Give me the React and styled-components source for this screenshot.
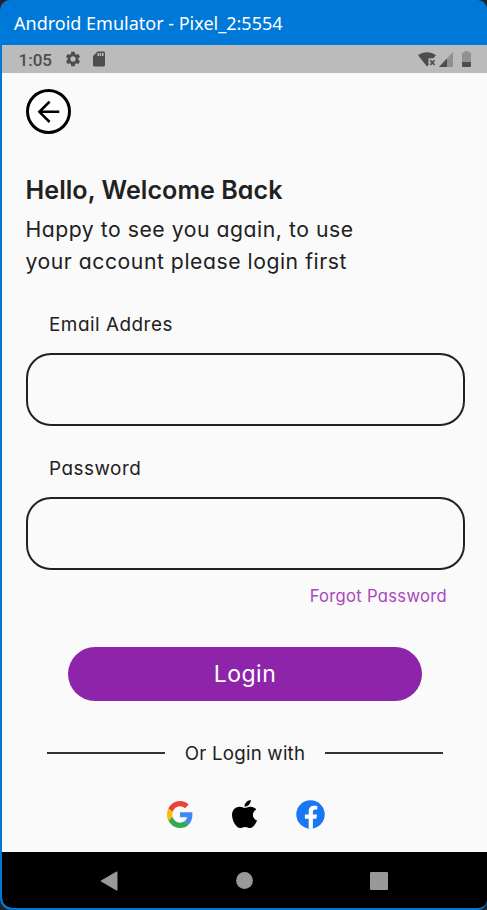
import React from "react";
import styled, { createGlobalStyle } from "styled-components";
import { MdSettings, MdSdCard } from "react-icons/md";

const GlobalStyle = createGlobalStyle`
  * { box-sizing: border-box; }
  body { margin: 0; background: #20242c; }
`;

const Window = styled.div`
  display: flex;
  flex-direction: column;
  width: 487px;
  height: 910px;
  overflow: hidden;
  background: #0078d7;
  border-left: 2px solid #0078d7;
  border-bottom: 2px solid #0078d7;
  border-radius: 10px 9px 9px 12px;
`;

const TitleBar = styled.header`
  display: flex;
  align-items: center;
  flex: none;
  height: 45px;
  padding: 0 12px;
  color: #fff;
  font: 400 18px "Noto Sans", "Open Sans", sans-serif;
  white-space: nowrap;
`;

const StatusBar = styled.div`
  display: flex;
  align-items: center;
  justify-content: space-between;
  flex: none;
  height: 28px;
  padding: 0 16px 0 16.5px;
  background: #bbb;
  color: #4d4d4d;
`;

const Clock = styled.span`
  width: 36px;
  padding-top: 1px;
  font: 500 17px/28px Roboto, sans-serif;
`;

const StatusGroup = styled.div`
  display: flex;
  align-items: center;
  gap: ${(p) => p.$gap}px;
`;

const Screen = styled.main`
  display: flex;
  flex-direction: column;
  flex: 1;
  padding: 16px 22px 0 24px;
  background: #fafafa;
  color: #212121;
  font-family: Inter, sans-serif;
  font-feature-settings: "cv11" 1;
  white-space: nowrap;
`;

const BackButton = styled.button`
  display: grid;
  place-items: center;
  flex: none;
  width: 45px;
  height: 45px;
  padding: 0;
  border: 3.5px solid #000;
  border-radius: 50%;
  background: #fff;
`;

const Heading = styled.h1`
  margin: 40px 0 7px -0.5px;
  font-size: 25.1px;
  font-weight: 600;
  line-height: 32px;
  letter-spacing: 0.04px;
`;

const Intro = styled.p`
  margin: 0 0 1px -0.5px;
  font-size: 21.2px;
  line-height: 32px;
  letter-spacing: 0.53px;
`;

const Field = styled.label`
  display: flex;
  flex-direction: column;
  gap: 15.5px;
  margin-top: ${(p) => p.$top}px;
`;

const FieldName = styled.span`
  padding-left: 23px;
  font-size: 18.9px;
  line-height: 25px;
  letter-spacing: 0.5px;
`;

const Input = styled.input`
  width: 439px;
  height: 73.5px;
  padding: 0 24px;
  border: 2px solid #212121;
  border-radius: 25px;
  background: transparent;
  font: inherit;
  font-size: 18px;
  outline: none;
`;

const ForgotLink = styled.a`
  align-self: flex-end;
  margin: 16px 18px 0 0;
  color: #ab47bc;
  font-size: 16.6px;
  line-height: 20px;
  letter-spacing: 0.3px;
`;

const LoginButton = styled.button`
  width: 354px;
  height: 54px;
  margin: 41px 0 0 42px;
  padding: 0;
  border: 0;
  border-radius: 27px;
  background: #8e24aa;
  color: #fff;
  font: inherit;
  font-size: 23px;
  font-feature-settings: inherit;
  letter-spacing: 0.5px;
`;

const Divider = styled.div`
  display: grid;
  grid-template-columns: 118px 1fr 118px;
  align-items: center;
  width: 396px;
  height: 24px;
  margin: 40px 0 0 21px;
  font-size: 18.7px;
  letter-spacing: 0.22px;
  text-align: center;
`;

const Rule = styled.span`
  height: 2px;
  background: #333;
`;

const Socials = styled.div`
  display: flex;
  align-items: center;
  justify-content: space-between;
  width: 158px;
  height: 30px;
  margin: 34px 0 0 141px;
`;

const NavBar = styled.nav`
  display: flex;
  align-items: center;
  justify-content: space-between;
  flex: none;
  height: 56px;
  padding: 1px 99px 0 98px;
  background: #000;
  border-radius: 0 0 8px 10px;
`;

function WifiIcon() {
  return (
    <svg width="19" height="17" viewBox="0 0 19 17">
      <path d="M0 4.2C5 .2 13 .2 18 4.2L15.3 7.2H10.5V14L9 15.6Z" fill="currentColor" />
      <path d="M12.2 9.2l4.4 4.8M16.6 9.2L12.2 14" stroke="currentColor" strokeWidth="1.7" />
    </svg>
  );
}

function SignalIcon() {
  return (
    <svg width="14" height="15" viewBox="0 0 14 15">
      <path d="M14 0V15H0Z" fill="#919191" />
      <path d="M8 6.4V15H0Z" fill="currentColor" />
    </svg>
  );
}

function BatteryIcon() {
  return (
    <svg width="9" height="16" viewBox="0 0 9 16">
      <path d="M2.7 0h3.6v1.6H8q1 0 1 1V11H0V2.6q0-1 1-1h1.7Z" fill="#919191" />
      <path d="M0 11h9v4q0 1-1 1H1q-1 0-1-1Z" fill="currentColor" />
    </svg>
  );
}

function ArrowIcon() {
  return (
    <svg width="37" height="37" viewBox="0 0 37 37" fill="none" stroke="#000" strokeWidth="2.6">
      <path d="M29.3 18.8H9.5M19.6 8.6L9.4 18.8L19.6 29" />
    </svg>
  );
}

function GoogleIcon() {
  return (
    <svg width="26" height="27" viewBox="0 0 48 48" preserveAspectRatio="none">
      <path fill="#EA4335" d="M24 9.5c3.54 0 6.71 1.22 9.21 3.6l6.85-6.85C35.9 2.38 30.47 0 24 0 14.62 0 6.51 5.38 2.56 13.22l7.98 6.19C12.43 13.72 17.74 9.5 24 9.5z" />
      <path fill="#4285F4" d="M46.98 24.55c0-1.57-.15-3.09-.38-4.55H24v9.02h12.94c-.58 2.96-2.26 5.48-4.78 7.18l7.73 6c4.51-4.18 7.09-10.36 7.09-17.65z" />
      <path fill="#FBBC05" d="M10.53 28.59c-.48-1.45-.76-2.99-.76-4.59s.27-3.14.76-4.59l-7.98-6.19C.92 16.46 0 20.12 0 24c0 3.88.92 7.54 2.56 10.78l7.97-6.19z" />
      <path fill="#34A853" d="M24 48c6.48 0 11.93-2.13 15.89-5.81l-7.73-6c-2.15 1.45-4.92 2.3-8.16 2.3-6.26 0-11.57-4.22-13.47-9.91l-7.98 6.19C6.51 42.62 14.62 48 24 48z" />
    </svg>
  );
}

function AppleIcon() {
  return (
    <svg width="25" height="28" viewBox="4 32 376 448" preserveAspectRatio="none">
      <path d="M318.7 268.7c-.2-36.7 16.4-64.4 50-84.8-18.8-26.9-47.2-41.7-84.7-44.6-35.5-2.8-74.3 20.7-88.5 20.7-15 0-49.4-19.7-76.4-19.7C63.3 141.2 4 184.8 4 273.5q0 39.3 14.4 81.2c12.8 36.7 59 126.7 107.2 125.2 25.2-.6 43-17.9 75.8-17.9 31.8 0 48.3 17.9 76.4 17.9 48.6-.7 90.4-82.5 102.6-119.3-65.2-30.7-61.7-90-61.7-91.9zm-56.6-164.2c27.3-32.4 24.8-61.9 24-72.5-24.1 1.4-52 16.4-67.9 34.9-17.5 19.8-27.8 44.3-25.6 71.9 26.1 2 49.9-11.4 69.5-34.3z" />
    </svg>
  );
}

function FacebookIcon() {
  return (
    <svg width="29" height="29" viewBox="0 0 29 29">
      <circle cx="14.5" cy="14.5" r="14.2" fill="#1877f2" />
      <path fill="#fff" d="M12.7 28.8V18.7H8.9v-4.2h3.8v-3.2c0-3.8 2.2-5.6 5.5-5.6 1.5 0 2.8.2 3.1.3v3.6h-1.8c-2 0-2.6 1-2.6 2.3v2.6H21l-.7 4.2h-3.4v10.1Z" />
    </svg>
  );
}

function NavIcons() {
  return (
    <>
      <svg width="18" height="20" viewBox="0 0 18 20">
        <path d="M1.4 10L16.8 1.2V18.8Z" fill="#999" stroke="#999" strokeWidth="1.4" strokeLinejoin="round" />
      </svg>
      <svg width="17" height="17" viewBox="0 0 17 17">
        <circle cx="8.5" cy="8.5" r="8.4" fill="#999" />
      </svg>
      <svg width="18" height="18" viewBox="0 0 18 18">
        <rect width="18" height="18" rx="1.2" fill="#999" />
      </svg>
    </>
  );
}

export default function App() {
  return (
    <>
      <GlobalStyle />
      <Window>
        <TitleBar>Android Emulator - Pixel_2:5554</TitleBar>
        <StatusBar>
          <StatusGroup $gap={9}>
            <Clock>1:05</Clock>
            <StatusGroup $gap={8}>
              <MdSettings size={18} />
              <MdSdCard size={18} />
            </StatusGroup>
          </StatusGroup>
          <StatusGroup $gap={9}>
            <StatusGroup $gap={2}>
              <WifiIcon />
              <SignalIcon />
            </StatusGroup>
            <BatteryIcon />
          </StatusGroup>
        </StatusBar>
        <Screen>
          <BackButton aria-label="Back"><ArrowIcon /></BackButton>
          <Heading>Hello, Welcome Back</Heading>
          <Intro>
            Happy to see you again, to use
            <br />
            your account please login first
          </Intro>
          <Field $top={34}>
            <FieldName>Email Addres</FieldName>
            <Input type="email" />
          </Field>
          <Field $top={30}>
            <FieldName>Password</FieldName>
            <Input type="password" />
          </Field>
          <ForgotLink>Forgot Password</ForgotLink>
          <LoginButton>Login</LoginButton>
          <Divider>
            <Rule />
            <span>Or Login with</span>
            <Rule />
          </Divider>
          <Socials>
            <GoogleIcon />
            <AppleIcon />
            <FacebookIcon />
          </Socials>
        </Screen>
        <NavBar>
          <NavIcons />
        </NavBar>
      </Window>
    </>
  );
}
